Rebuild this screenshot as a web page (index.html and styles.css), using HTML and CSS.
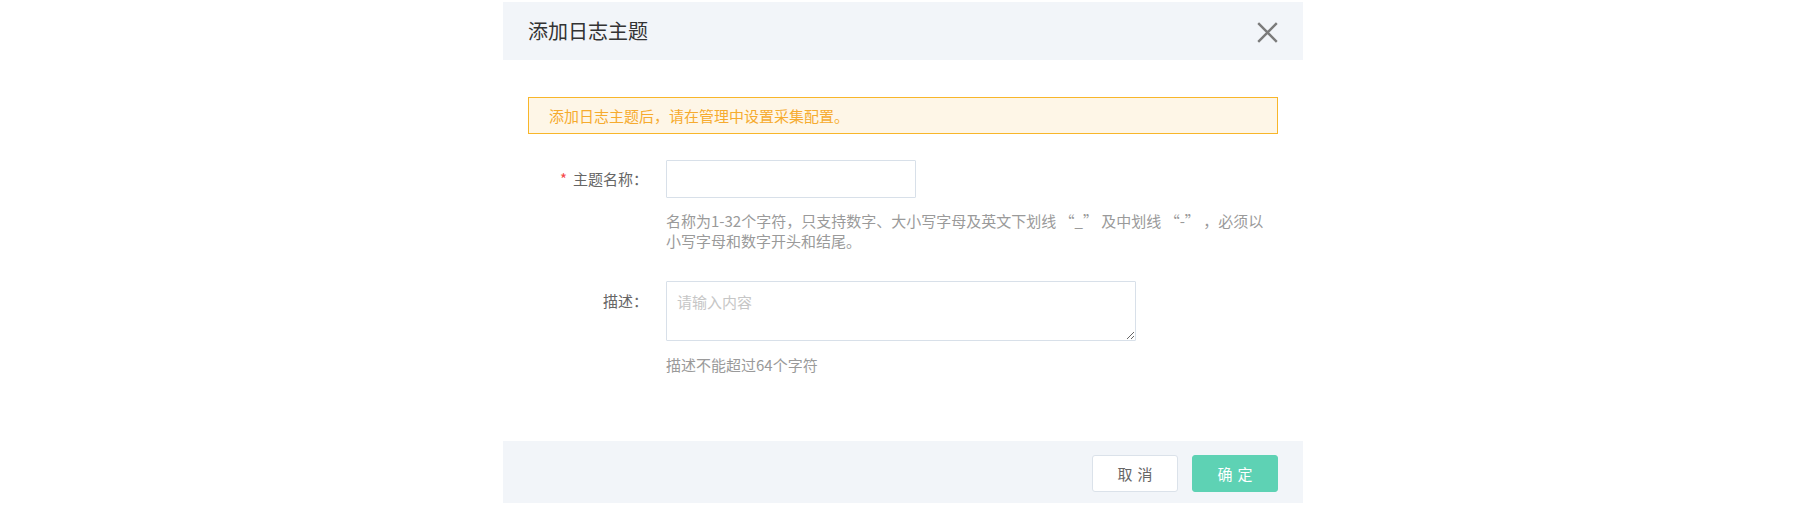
FILE: index.html
```html
<!DOCTYPE html>
<html lang="zh-CN">
<head>
<meta charset="utf-8">
<title>添加日志主题</title>
<link rel="stylesheet" href="styles.css">
</head>
<body>
<div class="page">
  <div class="dialog">
    <div class="dialog-header">
      <span class="dialog-title">添加日志主题</span>
      <span class="dialog-close" aria-label="关闭">
        <svg width="21" height="21" viewBox="0 0 21 21"><path d="M1.2 1.2 L19.8 19.8 M19.8 1.2 L1.2 19.8" stroke="#7b7b7b" stroke-width="2.4" fill="none"/></svg>
      </span>
    </div>
    <div class="dialog-body">
      <div class="alert">添加日志主题后，请在管理中设置采集配置。</div>
      <div class="form-item first">
        <label class="form-label"><span class="required">*</span>主题名称<span class="colon">：</span></label>
        <div class="form-control">
          <input class="input" type="text">
          <div class="hint hint-wide">名称为1-32个字符，只支持数字、大小写字母及英文下划线 “_” 及中划线 “-” ，必须以小写字母和数字开头和结尾。</div>
        </div>
      </div>
      <div class="form-item second">
        <label class="form-label label-tall">描述<span class="colon">：</span></label>
        <div class="form-control">
          <textarea class="textarea" placeholder="请输入内容"></textarea>
          <div class="hint">描述不能超过64个字符</div>
        </div>
      </div>
    </div>
    <div class="dialog-footer">
      <button class="btn btn-cancel">取消</button>
      <button class="btn btn-primary">确定</button>
    </div>
  </div>
</div>
</body>
</html>
```
FILE: styles.css
```css
html, body {
  margin: 0;
  padding: 0;
  background: #ffffff;
}
body {
  font-family: "Noto Sans CJK SC", "Noto Sans", sans-serif;
  font-size: 15px;
  color: #333;
}
.page {
  display: flex;
  justify-content: center;
  padding: 2px 5px 0 0;
}
.dialog {
  width: 800px;
  background: #fff;
  display: flex;
  flex-direction: column;
}
.dialog-header {
  height: 58px;
  background: #f2f5f9;
  display: flex;
  align-items: center;
  justify-content: space-between;
  padding: 0 25px;
}
.dialog-title {
  font-size: 20px;
  color: #333;
  line-height: 24px;
}
.dialog-close {
  display: flex;
  width: 21px;
  height: 21px;
  margin-top: 2px;
}
.dialog-body {
  padding: 37px 25px 66px;
}
.alert {
  border: 1px solid #f8b62a;
  background: #fef6e7;
  color: #f6ab2e;
  line-height: 35px;
  padding: 0 20px;
  font-size: 15px;
}
.form-item {
  display: flex;
  align-items: flex-start;
}
.form-item.first {
  margin-top: 26px;
}
.form-item.second {
  margin-top: 30px;
}
.form-label {
  width: 120px;
  flex: none;
  text-align: right;
  color: #666;
  line-height: 38px;
  margin-right: 18px;
}
.colon {
  font-family: "Noto Sans CJK TC", "Noto Sans CJK SC", sans-serif;
}
.label-tall {
  line-height: 40px;
}
.required {
  color: #f5474a;
  margin-right: 6px;
}
.form-control {
  display: flex;
  flex-direction: column;
}
.input {
  width: 250px;
  height: 38px;
  box-sizing: border-box;
  border: 1px solid #d8e0e9;
  border-radius: 1px;
  outline: none;
  margin: 0;
  padding: 0 10px;
  font: inherit;
}
.textarea {
  width: 470px;
  height: 60px;
  box-sizing: border-box;
  border: 1px solid #d8e0e9;
  border-radius: 1px;
  margin: 0;
  padding: 10px 10px;
  font: inherit;
  font-size: 15px;
  line-height: 20px;
  outline: none;
  display: block;
}
.textarea::placeholder {
  color: #c6c6c6;
}
.hint {
  margin-top: 13px;
  color: #9a9a9a;
  line-height: 20px;
  font-size: 15px;
}
.second .hint {
  margin-top: 14px;
}
.hint-wide {
  width: 598px;
}
.dialog-footer {
  background: #f2f5f9;
  height: 62px;
  box-sizing: border-box;
  padding: 14px 25px 0;
  display: flex;
  justify-content: flex-end;
  align-items: flex-start;
  gap: 14px;
}
.btn {
  width: 86px;
  height: 37px;
  box-sizing: border-box;
  border-radius: 3px;
  font-family: inherit;
  font-size: 15px;
  letter-spacing: 5px;
  text-indent: 5px;
  cursor: pointer;
  padding: 0;
}
.btn-cancel {
  background: #fff;
  border: 1px solid #dbe2ea;
  color: #666;
}
.btn-primary {
  background: #5ed2b4;
  border: 1px solid #5ed2b4;
  color: #fff;
}
```
